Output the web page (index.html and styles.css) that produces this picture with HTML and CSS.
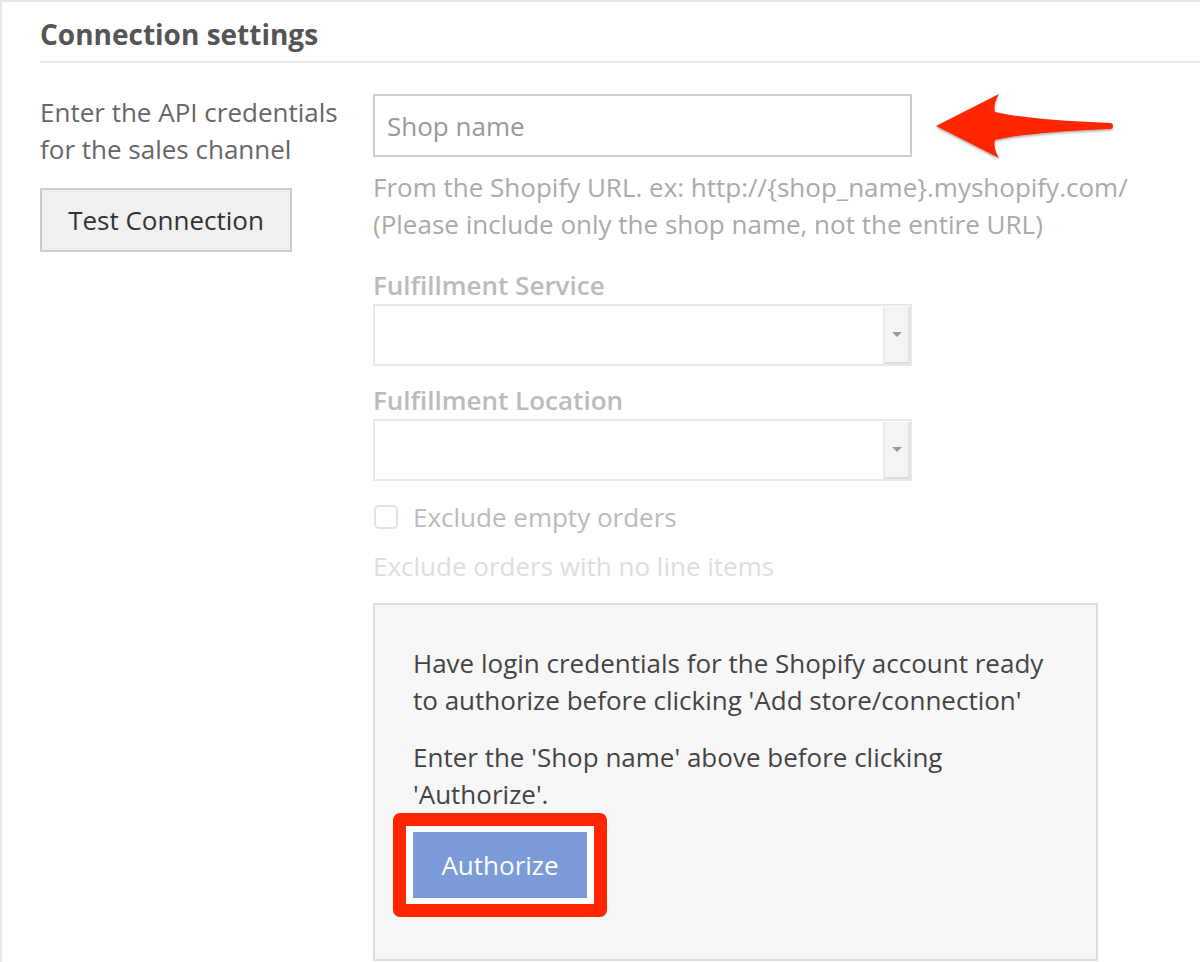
FILE: index.html
```html
<!DOCTYPE html>
<html>
<head>
<meta charset="utf-8">
<link rel="stylesheet" href="styles.css">
</head>
<body>
<div class="page">
  <h2 class="heading">Connection settings</h2>
  <div class="row">
    <div class="left">
      <p class="label">Enter the API credentials for the sales channel</p>
      <button class="btn-test">Test Connection</button>
    </div>
    <div class="right">
      <div class="input-wrap">
        <input class="text-input" type="text" placeholder="Shop name">
        <svg class="arrow" width="190" height="75" viewBox="0 0 190 75">
          <defs>
            <filter id="sh" x="-10%" y="-20%" width="120%" height="150%">
              <feDropShadow dx="0" dy="1.5" stdDeviation="1.2" flood-color="#000" flood-opacity="0.35"/>
            </filter>
          </defs>
          <path filter="url(#sh)" fill="#ff2600" d="M6 36 L69 4 Q63 14 65 22 Q100 30 180 33 A3 3 0 0 1 180 39 Q100 42 65 50 Q63 58 69 68 Z"/>
        </svg>
      </div>
      <p class="help">From the Shopify URL. ex: http://{shop_name}.myshopify.com/<br>(Please include only the shop name, not the entire URL)</p>

      <div class="field-label first">Fulfillment Service</div>
      <div class="select"><span class="select-btn"><span class="tri"></span></span></div>

      <div class="field-label">Fulfillment Location</div>
      <div class="select"><span class="select-btn"><span class="tri"></span></span></div>

      <label class="check">
        <span class="box"></span>
        <span class="check-text">Exclude empty orders</span>
      </label>
      <p class="check-help">Exclude orders with no line items</p>

      <div class="panel">
        <p class="panel-text">Have login credentials for the Shopify account ready to authorize before clicking 'Add store/connection'</p>
        <p class="panel-text second">Enter the 'Shop name' above before clicking 'Authorize'.</p>
        <div class="highlight"><button class="btn-auth">Authorize</button></div>
      </div>
    </div>
  </div>
</div>
</body>
</html>
```
FILE: styles.css
```css
html, body {
  margin: 0;
  padding: 0;
  background: #fff;
  height: 962px;
  overflow: hidden;
}
body {
  font-family: "Open Sans", "Liberation Sans", sans-serif;
  font-size: 26px;
  color: #666;
}
.page {
  border-top: 2px solid #e6e6e6;
  border-left: 2px solid #e6e6e6;
  height: 1000px;
  padding-left: 38px;
}
.heading {
  margin: 14px 0 0 0;
  font-size: 28px;
  line-height: 36px;
  font-weight: 700;
  color: #555;
  padding-bottom: 9px;
  border-bottom: 2px solid #e8e8e8;
}
.row {
  display: flex;
  margin-top: 31px;
}
.left {
  width: 333px;
  flex: none;
}
.label {
  margin: 0;
  line-height: 37px;
  color: #666;
}
.btn-test {
  margin-top: 20px;
  width: 252px;
  height: 64px;
  border: 2px solid #ccc;
  background: #f0f0f0;
  font-family: inherit;
  font-size: 26px;
  color: #333;
  padding: 0;
}
.right {
  width: 725px;
  flex: none;
}
.input-wrap {
  position: relative;
  width: 539px;
}
.text-input {
  display: block;
  box-sizing: border-box;
  width: 539px;
  height: 63px;
  border: 2px solid #ccc;
  padding: 0 12px;
  font-family: inherit;
  font-size: 26px;
  color: #333;
  margin: 0;
  outline: none;
}
.text-input::placeholder {
  color: #999;
}
.arrow {
  position: absolute;
  left: 557px;
  top: -4px;
}
.help {
  margin: 12px 0 0 0;
  line-height: 37px;
  color: #aaa;
  white-space: nowrap;
}
.field-label {
  margin-top: 16px;
  font-weight: 600;
  color: #bbb;
  line-height: 37px;
}
.field-label.first {
  margin-top: 24px;
}
.select {
  box-sizing: border-box;
  width: 539px;
  height: 62px;
  border: 2px solid #e8e8e8;
  background: #fff;
  position: relative;
  display: flex;
  justify-content: flex-end;
  padding: 1px 0 0 0;
}
.select-btn {
  width: 27px;
  height: 57px;
  background: #f5f5f5;
  border-left: 2px solid #ebebeb;
  border-right: 2px solid #e2e2e2;
  border-bottom: 2px solid #dcdcdc;
  display: flex;
  align-items: center;
  justify-content: center;
  box-sizing: border-box;
}
.tri {
  width: 0;
  height: 0;
  border-left: 5px solid transparent;
  border-right: 5px solid transparent;
  border-top: 5px solid #999;
}
.check {
  display: flex;
  align-items: center;
  margin-top: 17px;
  height: 37px;
}
.box {
  box-sizing: border-box;
  width: 24px;
  height: 24px;
  border: 2px solid #e2e2e2;
  border-radius: 5px;
  margin-left: 1px;
  background: #fff;
}
.check-text {
  margin-left: 15px;
  color: #bbb;
}
.check-help {
  margin: 13px 0 0 0;
  line-height: 37px;
  color: #ddd;
}
.panel {
  box-sizing: border-box;
  margin-top: 18px;
  width: 725px;
  height: 358px;
  border: 2px solid #ddd;
  background: #f7f7f7;
  padding: 40px 38px 0 38px;
}
.panel-text {
  margin: 0;
  line-height: 37px;
  color: #444;
}
.panel-text.second {
  margin-top: 20px;
}
.highlight {
  display: inline-block;
  margin-left: -20px;
  border: 13px solid #ff2600;
  border-radius: 7px;
  background: #fff;
  padding: 6px 7px 6px 7px;
}
.btn-auth {
  display: block;
  width: 174px;
  height: 66px;
  border: none;
  background: #7b9bd8;
  color: #fff;
  font-family: inherit;
  font-size: 26px;
  padding: 0;
}
```
